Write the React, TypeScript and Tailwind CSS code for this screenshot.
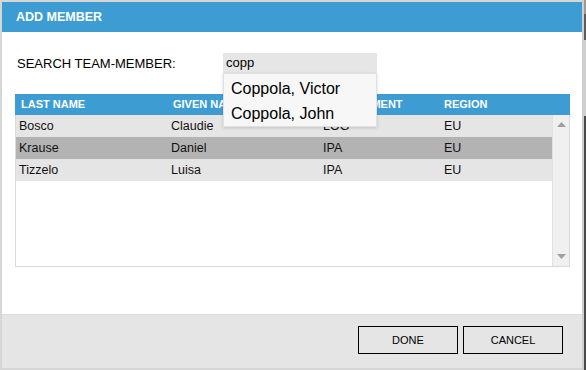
import React from "react";

const rows = [
  { last: "Bosco", given: "Claudie", dept: "LOG", region: "EU", sel: false },
  { last: "Krause", given: "Daniel", dept: "IPA", region: "EU", sel: true },
  { last: "Tizzelo", given: "Luisa", dept: "IPA", region: "EU", sel: false },
];

export default function App() {
  return (
    <div
      className="w-[586px] h-[370px] bg-[#d6d6d6] flex overflow-hidden"
      style={{ fontFamily: '"Liberation Sans", Arial, sans-serif' }}
    >
      <div className="ml-[2px] mt-[2px] w-[580px] h-[366px] bg-white flex flex-col">
        <div className="h-[30px] bg-[#3d9dd3] flex items-center pl-[14px] shrink-0">
          <span className="text-white font-bold text-[12.5px] leading-none">ADD MEMBER</span>
        </div>
        <div className="flex-1 relative pt-[21px] px-[13px]">
          <div className="flex items-center h-[20px]">
            <span className="text-[13px] text-black w-[208px] pl-[2px] leading-none">
              SEARCH TEAM-MEMBER:
            </span>
            <div className="w-[154px] h-[20px] bg-[#e6e6e6] flex items-center pl-[3px] text-[13px] text-black">
              copp
            </div>
          </div>
          <div className="mt-[21px] w-[555px] h-[173px] flex flex-col">
            <div className="h-[21px] bg-[#3d9dd3] flex items-center text-white font-bold text-[11px] shrink-0">
              <div className="w-[152px] pl-[6px]">LAST NAME</div>
              <div className="w-[152px] pl-[6px]">GIVEN NAME</div>
              <div className="w-[119px] pl-[8px]">DEPARTMENT</div>
              <div className="pl-[6px]">REGION</div>
            </div>
            <div className="flex-1 flex border-l border-r border-b border-[#d9d9d9]">
              <div className="flex-1">
                {rows.map((r) => (
                  <div
                    key={r.last}
                    className={`h-[22px] flex items-center text-[12.5px] text-[#111] ${
                      r.sel ? "bg-[#b3b3b3]" : "bg-[#e5e5e5]"
                    }`}
                  >
                    <div className="w-[155px] pl-[3px]">{r.last}</div>
                    <div className="w-[152px]">{r.given}</div>
                    <div className="w-[121px]">{r.dept}</div>
                    <div>{r.region}</div>
                  </div>
                ))}
              </div>
              <div className="w-[17px] bg-[#f0f0f0] border-l border-[#e2e2e2] flex flex-col items-center justify-between py-[7px]">
                <svg width="9" height="5" viewBox="0 0 9 5">
                  <path d="M4.5 0 L9 5 L0 5 Z" fill="#a0a0a0" />
                </svg>
                <svg width="9" height="5" viewBox="0 0 9 5">
                  <path d="M0 0 L9 0 L4.5 5 Z" fill="#a0a0a0" />
                </svg>
              </div>
            </div>
          </div>
          <div className="absolute left-[221px] top-[41px] w-[154px] h-[54px] bg-[#f7f7f7] border border-[#e0e0e0] shadow-[0_1px_3px_rgba(0,0,0,0.15)] flex flex-col pt-[2px]">
            <div className="h-[25px] flex items-center pl-[7px] text-[16px] text-black">
              Coppola, Victor
            </div>
            <div className="h-[25px] flex items-center pl-[7px] text-[16px] text-black">
              Coppola, John
            </div>
          </div>
        </div>
        <div className="h-[54px] bg-[#e5e5e5] border-t border-[#dcdcdc] flex items-start justify-end pt-[11px] pr-[19px] gap-[5px] shrink-0">
          <button className="w-[100px] h-[28px] border border-black bg-[#e5e5e5] text-[11px] text-black">
            DONE
          </button>
          <button className="w-[100px] h-[28px] border border-black bg-[#e5e5e5] text-[11px] text-black">
            CANCEL
          </button>
        </div>
      </div>
      <div className="w-[2px] h-full bg-[#cfcfcf]" />
      <div className="w-[2px] h-full flex flex-col">
        <div className="h-[14px] bg-[#9a9a9a]" />
        <div className="h-[26px] bg-[#5c5c5c]" />
        <div className="h-[76px] bg-[#cfcfcf]" />
        <div className="flex-1 bg-[#4a4a4a]" />
      </div>
    </div>
  );
}
